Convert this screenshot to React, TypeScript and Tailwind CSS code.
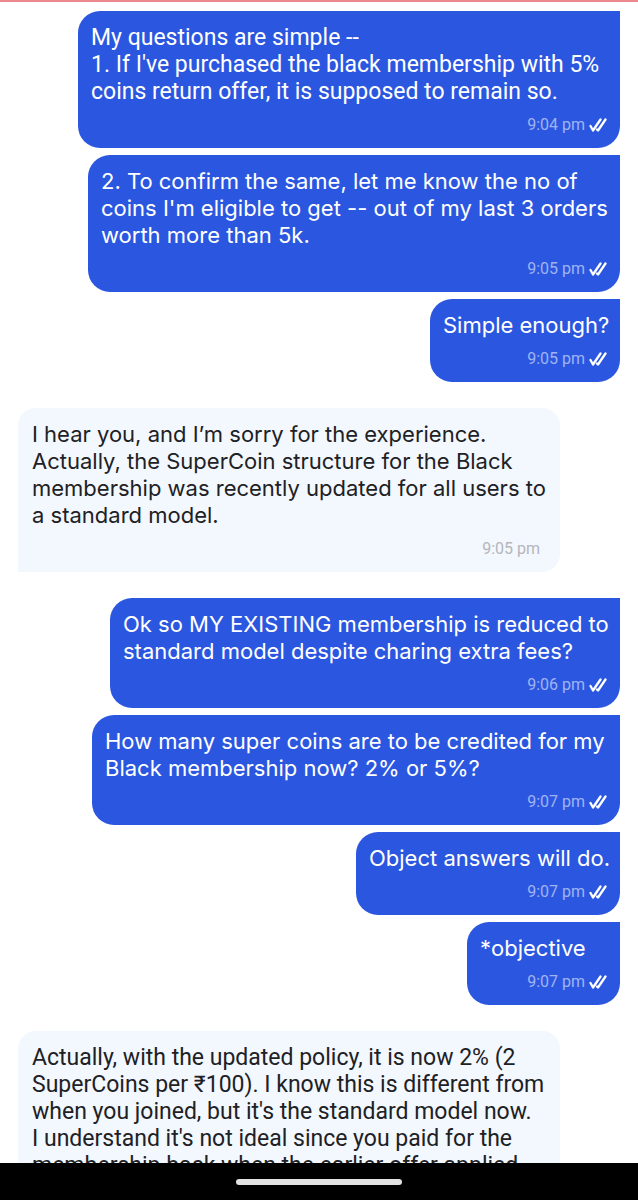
import * as React from 'react';

type Msg = {
  id: number;
  mine: boolean;
  lines: string[];
  time: string;
  width: string;
  font: 'roboto' | 'inter';
};

const messages: Msg[] = [
  {
    id: 1,
    mine: true,
    lines: [
      'My questions are simple --',
      "1. If I've purchased the black membership with 5%",
      'coins return offer, it is supposed to remain so.',
    ],
    time: '9:04 pm',
    width: 'w-[542px]',
    font: 'roboto',
  },
  {
    id: 2,
    mine: true,
    lines: [
      '2. To confirm the same, let me know the no of',
      "coins I'm eligible to get -- out of my last 3 orders",
      'worth more than 5k.',
    ],
    time: '9:05 pm',
    width: 'w-[532px]',
    font: 'inter',
  },
  { id: 3, mine: true, lines: ['Simple enough?'], time: '9:05 pm', width: 'w-[190px]', font: 'inter' },
  {
    id: 4,
    mine: false,
    lines: [
      'I hear you, and I’m sorry for the experience.',
      'Actually, the SuperCoin structure for the Black',
      'membership was recently updated for all users to',
      'a standard model.',
    ],
    time: '9:05 pm',
    width: 'w-[542px]',
    font: 'inter',
  },
  {
    id: 5,
    mine: true,
    lines: ['Ok so MY EXISTING membership is reduced to', 'standard model despite charing extra fees?'],
    time: '9:06 pm',
    width: 'w-[510px]',
    font: 'inter',
  },
  {
    id: 6,
    mine: true,
    lines: ['How many super coins are to be credited for my', 'Black membership now? 2% or 5%?'],
    time: '9:07 pm',
    width: 'w-[528px]',
    font: 'inter',
  },
  { id: 7, mine: true, lines: ['Object answers will do.'], time: '9:07 pm', width: 'w-[264px]', font: 'inter' },
  { id: 8, mine: true, lines: ['*objective'], time: '9:07 pm', width: 'w-[153px]', font: 'inter' },
  {
    id: 9,
    mine: false,
    lines: [
      'Actually, with the updated policy, it is now 2% (2',
      'SuperCoins per ₹100). I know this is different from',
      "when you joined, but it's the standard model now.",
      "I understand it's not ideal since you paid for the",
      'membership back when the earlier offer applied.',
    ],
    time: '9:08 pm',
    width: 'w-[542px]',
    font: 'roboto',
  },
];

// white double tick, slanted like the chat app's read receipt
function DoubleTick() {
  return (
    <svg width="18" height="14" viewBox="0 0 18 14" fill="none" stroke="white" strokeWidth="2.3" strokeLinecap="round" strokeLinejoin="round">
      <path d="M1.5 8 L4 12.5 L11.5 1.5" />
      <path d="M8 11.5 L9 12.5 L16.5 1.5" />
    </svg>
  );
}

function Bubble({ msg }: { msg: Msg }) {
  const fontClass = msg.font === 'roboto' ? "font-['Roboto',sans-serif] text-[23px]" : "font-['Inter',sans-serif] text-[22px]";
  return (
    <div className={msg.mine ? 'flex justify-end' : 'flex justify-start'}>
      <div
        className={
          msg.mine
            ? `${msg.width} bg-[#2b57e0] text-white rounded-[22px] rounded-tr-none px-[13px] pt-[13px] pb-[13px]`
            : `${msg.width} bg-[#f3f7fe] text-[#202124] rounded-[18px] rounded-bl-none px-[14px] pt-[13px] pb-[13px]`
        }
      >
        <div className={`${fontClass} leading-[27px] whitespace-nowrap`}>
          {msg.lines.map((l, i) => (
            <div key={i}>{l}</div>
          ))}
        </div>
        <div className="mt-[10px] flex items-center justify-end gap-[4px] h-[20px] font-['Roboto',sans-serif] text-[16px]">
          <span className={msg.mine ? 'text-[#a0b3f1]' : 'text-[#b4b6ba] pr-[6px]'}>{msg.time}</span>
          {msg.mine && <DoubleTick />}
        </div>
      </div>
    </div>
  );
}

export default function App() {
  return (
    <div className="h-[1200px] w-full flex flex-col bg-white overflow-hidden">
      <div className="h-[2px] bg-[#ea8a90]" />
      <main className="flex-1 overflow-hidden px-[18px] pt-[9px]">
        {messages.map((m, i) => {
          const prev = messages[i - 1];
          const gap = !prev ? '' : prev.mine === m.mine ? 'mt-[7px]' : 'mt-[26px]';
          return (
            <div key={m.id} className={gap}>
              <Bubble msg={m} />
            </div>
          );
        })}
      </main>
      <div className="h-[37px] bg-black flex items-center justify-center shrink-0">
        <div className="w-[166px] h-[6px] rounded-full bg-[#e2e2e2]" />
      </div>
    </div>
  );
}
